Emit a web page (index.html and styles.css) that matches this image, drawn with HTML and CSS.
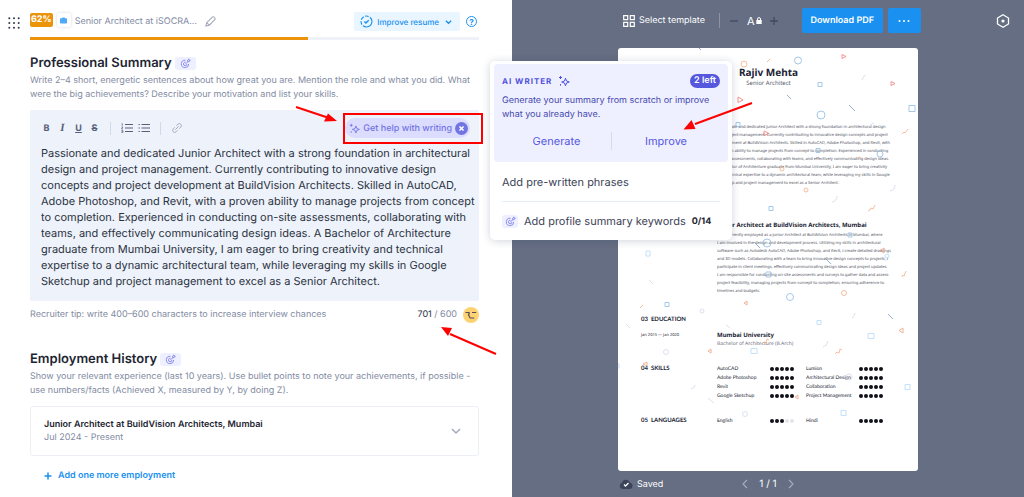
FILE: index.html
```
<!DOCTYPE html>
<html lang="en">
<head>
<meta charset="utf-8">
<title>Resume editor</title>
<link rel="stylesheet" href="styles.css">
</head>
<body>
<svg class="defs" aria-hidden="true">
  <symbol id="target" viewBox="0 0 12 12"><path d="M6 2.500a4 4 0 1 0 3.500 4M6 4.600a1.900 1.900 0 1 0 1.600 2M6 6.500 8.500 4M8.300 4.100V2.400L9.800 1v1.400h1.400L9.900 4.100z"/></symbol>
  <symbol id="sparkle" viewBox="0 0 12 12"><path d="M7.500 3.200 8.500 6l2.800 1-2.800 1-1 2.800-1-2.800-2.800-1 2.800-1zM2.500 1v3M1 2.500h3M2.500 9v1.600"/></symbol>
</svg>
<div class="app">
  <main class="editor">
    <button class="menu" aria-label="Menu">
      <svg viewBox="0 0 12 12" width="12" height="12"><g fill="#30374a"><circle cx="1.300" cy="1.300" r="1"/><circle cx="6" cy="1.300" r="1"/><circle cx="10.700" cy="1.300" r="1"/><circle cx="1.300" cy="6" r="1"/><circle cx="6" cy="6" r="1"/><circle cx="10.700" cy="6" r="1"/><circle cx="1.300" cy="10.700" r="1"/><circle cx="6" cy="10.700" r="1"/><circle cx="10.700" cy="10.700" r="1"/></g></svg>
    </button>
    <div class="column">
      <header class="topline">
        <span class="score">62%</span>
        <span class="case"><svg viewBox="0 0 8 8" width="7" height="7"><path fill="#4ea9f7" d="M2.200 1.500 2.800.5h2.400l.6 1h1.400q.8 0 .8.8v4.200q0 .8-.8.8H.8Q0 7.300 0 6.500V2.300q0-.8.8-.8z"/></svg></span>
        <span class="job">Senior Architect at iSOCRA...</span>
        <button class="plain" aria-label="Rename"><svg viewBox="0 0 12 12" width="11" height="11"><path class="line grey" d="M1 11 1.800 7.300 7.700 1.400a1.500 1.500 0 0 1 2.400 0l.5.6a1.500 1.500 0 0 1 0 2L4.700 10zM1.800 7.300 4.700 10"/></svg></button>
        <button class="improve"><svg viewBox="0 0 14 14" width="13" height="13"><circle class="line blue" cx="7" cy="7" r="5.900" stroke-dasharray="13 1.500 4 1.500 4 1.500 4 1.500"/><path class="line blue bold" d="m4.700 7 1.700 1.700 3-3"/></svg>Improve resume<svg viewBox="0 0 8 6" width="7" height="6"><path class="line blue bold" d="m1 1.500 3 3 3-3"/></svg></button>
        <button class="help" aria-label="Help">?</button>
      </header>
      <div class="progress"><i style="width:62%"></i></div>

      <section>
        <h2>Professional Summary <button class="tag" aria-label="Keywords"><svg width="11" height="11"><use href="#target"/></svg></button></h2>
        <p class="hint">Write 2–4 short, energetic sentences about how great you are. Mention the role and what you did. What<br>were the big achievements? Describe your motivation and list your skills.</p>
        <div class="box">
          <div class="tools">
            <button aria-label="Bold"><b>B</b></button><button aria-label="Italic"><i class="serif">I</i></button><button aria-label="Underline"><u>U</u></button><button aria-label="Strikethrough"><s>S</s></button>
            <span class="rule"></span>
            <button aria-label="Numbered list"><svg viewBox="0 0 12 10" width="12" height="10"><path class="line dark" d="M4 1.500h8M4 5h8M4 8.500h8"/><path class="line dark thin" d="M.5.7h.8v2M.4 4h1.500L.5 6h1.500M.4 7.500h1.500v2H.4M.8 8.500h1"/></svg></button><button aria-label="Bulleted list"><svg viewBox="0 0 12 10" width="12" height="10"><path class="line dark" d="M3.500 1.500H12M3.500 5H12M3.500 8.500H12M.5 1.500h1.300M.5 5h1.300M.5 8.500h1.300"/></svg></button>
            <span class="rule"></span>
            <button aria-label="Link"><svg viewBox="0 0 12 12" width="10" height="10"><path class="line grey" d="m4 8 4-4M5.200 3.300 7 1.500a2.450 2.450 0 0 1 3.500 3.500L8.700 6.800M6.800 8.700 5 10.500A2.450 2.450 0 0 1 1.500 7l1.800-1.800"/></svg></button>
            <button class="assist"><svg class="spark" width="11" height="11"><use href="#sparkle"/></svg>Get help with writing<svg viewBox="0 0 14 14" width="13" height="13"><circle cx="7" cy="7" r="7" fill="#7274e2"/><path d="m4.800 4.800 4.400 4.400m0-4.400L4.800 9.200" stroke="#fff" stroke-width="1.600"/></svg></button>
          </div>
          <textarea rows="9" wrap="off" spellcheck="false" aria-label="Professional summary">Passionate and dedicated Junior Architect with a strong foundation in architectural
design and project management. Currently contributing to innovative design
concepts and project development at BuildVision Architects. Skilled in AutoCAD,
Adobe Photoshop, and Revit, with a proven ability to manage projects from concept
to completion. Experienced in conducting on-site assessments, collaborating with
teams, and effectively communicating design ideas. A Bachelor of Architecture
graduate from Mumbai University, I am eager to bring creativity and technical
expertise to a dynamic architectural team, while leveraging my skills in Google
Sketchup and project management to excel as a Senior Architect.</textarea>
        </div>
        <div class="tip"><span>Recruiter tip: write 400–600 characters to increase interview chances</span><span class="count"><b>701</b> / 600</span><svg viewBox="0 0 16 16" width="16" height="16"><circle cx="8" cy="8" r="8" fill="#fdd272"/><path d="M2.500 5.500h4M9 5.500h4.200M6.500 5.500 5.500 8M5 8.300c1.500-.6 1 2 2.300 2.700h4" fill="none" stroke="#554a58" stroke-width="1.200"/></svg></div>
      </section>

      <section class="history">
        <h2>Employment History <button class="tag" aria-label="Keywords"><svg width="11" height="11"><use href="#target"/></svg></button></h2>
        <p class="hint">Show your relevant experience (last 10 years). Use bullet points to note your achievements, if possible -<br>use numbers/facts (Achieved X, measured by Y, by doing Z).</p>
        <button class="card"><span><strong>Junior Architect at BuildVision Architects, Mumbai</strong><small>Jul 2024 - Present</small></span><svg viewBox="0 0 10 8" width="10" height="8"><path class="line grey bold" d="m1 2 4 4 4-4"/></svg></button>
        <button class="add"><svg viewBox="0 0 8 8" width="8" height="8"><path class="line blue bold" d="M4 .5v7M.5 4h7"/></svg>Add one more employment</button>
      </section>
    </div>
  </main>

  <aside class="preview">
    <div class="bar">
      <button class="template"><svg viewBox="0 0 12 12" width="12" height="12"><path d="M.7.7h4v4h-4zM7.300.7h4v4h-4zM.7 7.300h4v4h-4zM7.300 7.300h4v4h-4z" fill="none" stroke="#fff" stroke-width="1.200"/></svg>Select template</button>
      <span class="split"></span>
      <button class="size" aria-label="Smaller text"><svg viewBox="0 0 8 8" width="8" height="8"><path d="M0 4h8"/></svg></button>
      <span class="letter">A<svg viewBox="0 0 6 7" width="6" height="7"><path fill="#fff" d="M.3 3h5.400v4H.3z"/><path d="M1.500 3V2q0-1.400 1.500-1.400T4.500 2v1" fill="none" stroke="#fff"/></svg></span>
      <button class="size" aria-label="Larger text"><svg viewBox="0 0 8 8" width="8" height="8"><path d="M0 4h8M4 0v8"/></svg></button>
      <button class="primary download">Download PDF</button>
      <button class="primary more" aria-label="More"><svg viewBox="0 0 12 4" width="12" height="4"><g fill="#fff"><circle cx="1.500" cy="2" r="1"/><circle cx="6" cy="2" r="1"/><circle cx="10.500" cy="2" r="1"/></g></svg></button>
      <button class="plain hex" aria-label="Settings"><svg viewBox="0 0 14 14" width="14" height="14"><path d="M7 .8 12.500 4v6L7 13.200 1.500 10V4z" fill="none" stroke="#fff" stroke-width="1.300"/><circle cx="7" cy="7" r="1.600" fill="#fff"/></svg></button>
    </div>

    <article class="sheet">
      <svg class="confetti" viewBox="0 0 300 423" aria-hidden="true">
        <g fill="none" stroke-width="1">
          <g stroke="#8dbbe6"><circle cx="180" cy="12.500" r="3.500"/><circle cx="203" cy="67" r="4"/><circle cx="262" cy="106" r="3"/><circle cx="149" cy="195" r="4"/><circle cx="172" cy="249" r="3.500"/><path d="M200 34.500h4v4h-4zM291 57.500h6v6h-6zM118 74.500h4v4h-4zM198 100.500h4v4h-4zM151 158.500h4v4h-4zM230 185h4v4h-4zM148 224h5v5h-5zM47 254.500h4v4h-4z"/></g>
          <g stroke="#b4dafb"><circle cx="269" cy="208" r="2"/><path d="M199 272.500h4v4h-4zM250 285.500h6v5h-6zM133 300.500h6v5h-6zM287 336.500h5v5h-5zM223 362.500h5v5h-5zM-2 316h3v4h-3zM28 203h4v5h-4z"/></g>
          <g stroke="#f27878"><path d="m224 6.500 4 2-4 2zM273 33.500l4 2-4 2zM120 49l5 3-5 2.500zM146 83l5 2.500-5 2z"/></g>
          <g stroke="#f3ae88"><path d="m103 165-4 2.500 4 2.500zM266 200l-4 2.500 4 2.500zM129 253l-3 2 3 2zM285 280l-4 2.500 4 2.500zM93 301l-3 2 3 2zM29 314l-4 2 4 2zM180 347l-3 2 3 2z" stroke="#f0a080"/><circle cx="126" cy="16" r="3"/><circle cx="164" cy="121" r="2"/><circle cx="188" cy="142" r="2"/><circle cx="226" cy="245" r="2.500"/><path d="m284 86 2-2 1 1 3-4M240 110l2-1 1 2M250 163l2-1 1-2 2 1 2-4M284 229l1-2 1 1 2-5M144 296l2-2 2 1 1-4 2 1M217 306l2-2 2 1 1-4 2 1M22 260l2-2 1-1M149 14l1-1 2-2"/></g>
          <g stroke="#809dcc"><path d="m231 57 6 6M169 47l4 4M136 194l6 6M207 210l6 6M270 266l5 5M81 0l2 2"/></g>
          <g stroke="#d3daea"><path d="M244 32q1-4 4-5M252 79q1-4 4-4M272 143q5-1 5-6M214 154q5-1 5-6M205 299q4-1 5-6M73 341q4-1 4-4M234 270q3-2 3-5M8 276l4 4M31 232l4 4"/><circle cx="48" cy="304" r="2.500"/><circle cx="127" cy="366" r="2.500"/><circle cx="231" cy="329" r="3"/><circle cx="84" cy="263" r="2"/><path d="m90 350 6 5M108 277l4 3"/></g>
        </g>
      </svg>
      <div class="person"><h1>Rajiv Mehta</h1><p>Senior Architect</p></div>
      <div class="resume">
        <p class="cv profile">Passionate and dedicated Junior Architect with a strong foundation in architectural design<br>and project management. Currently contributing to innovative design concepts and project<br>development at BuildVision Architects. Skilled in AutoCAD, Adobe Photoshop, and Revit, with<br>a proven ability to manage projects from concept to completion. Experienced in conducting<br>on-site assessments, collaborating with teams, and effectively communicating design ideas.<br>A Bachelor of Architecture graduate from Mumbai University, I am eager to bring creativity<br>and technical expertise to a dynamic architectural team, while leveraging my skills in Google<br>Sketchup and project management to excel as a Senior Architect.</p>
        <div class="cv work"><h3>Junior Architect at BuildVision Architects, Mumbai</h3><p>I am currently employed as a Junior Architect at BuildVision Architects in Mumbai, where<br>I am involved in the design and development process. Utilizing my skills in architectural<br>software such as Autodesk AutoCAD, Adobe Photoshop, and Revit, I create detailed drawings<br>and 3D models. Collaborating with a team to bring innovative design concepts to projects, I<br>participate in client meetings, effectively communicating design ideas and project updates.<br>I am responsible for conducting on-site assessments and surveys to gather data and assess<br>project feasibility, managing projects from concept to completion, ensuring adherence to<br>timelines and budgets.</p></div>
        <h4>03 &nbsp;EDUCATION</h4>
        <p class="date">Jan 2015 — Jan 2020</p>
        <div class="school"><h3>Mumbai University</h3><p>Bachelor of Architecture (B.Arch)</p></div>
        <h4>04 &nbsp;SKILLS</h4>
        <div class="skills">
          <span>AutoCAD</span><span class="dots"><i></i><i></i><i></i><i></i><i></i></span><span>Lumion</span><span class="dots"><i></i><i></i><i></i><i></i><i></i></span>
          <span>Adobe Photoshop</span><span class="dots"><i></i><i></i><i></i><i></i><i></i></span><span>Architectural Design</span><span class="dots"><i></i><i></i><i></i><i></i><i></i></span>
          <span>Revit</span><span class="dots"><i></i><i></i><i></i><i></i><i></i></span><span>Collaboration</span><span class="dots"><i></i><i></i><i></i><i></i><i></i></span>
          <span>Google Sketchup</span><span class="dots"><i></i><i></i><i></i><i></i><i></i></span><span>Project Management</span><span class="dots"><i></i><i></i><i></i><i></i><i></i></span>
        </div>
        <h4>05 &nbsp;LANGUAGES</h4>
        <div class="skills">
          <span>English</span><span class="dots"><i></i><i></i><i></i><i class="off"></i><i class="off"></i></span><span>Hindi</span><span class="dots"><i></i><i></i><i></i><i></i><i></i></span>
        </div>
      </div>
    </article>

    <footer class="foot">
      <span class="saved"><svg viewBox="0 0 14 10" width="14" height="10"><path fill="#3c4459" d="M3.500 10a3.200 3.200 0 0 1-.6-6.200 4.200 4.200 0 0 1 8-.3A3.300 3.300 0 0 1 10.600 10z"/><path d="m5 5.500 1.500 1.500 3-3" fill="none" stroke="#fff" stroke-width="1.300"/></svg>Saved</span>
      <nav class="pager"><button class="plain" aria-label="Previous page"><svg viewBox="0 0 6 10" width="6" height="10"><path d="M5 1 1 5l4 4"/></svg></button><span>1 / 1</span><button class="plain" aria-label="Next page"><svg viewBox="0 0 6 10" width="6" height="10"><path d="m1 1 4 4-4 4"/></svg></button></nav>
    </footer>
  </aside>

  <div class="popup" role="dialog" aria-label="AI writer">
    <div class="writer">
      <div class="head"><span class="name">AI WRITER</span><svg class="spark" width="12" height="12"><use href="#sparkle"/></svg><span class="left">2 left</span></div>
      <p>Generate your summary from scratch or improve<br>what you already have.</p>
      <div class="actions"><button>Generate</button><button>Improve</button></div>
    </div>
    <button class="row">Add pre-written phrases</button>
    <button class="row keys"><span class="tag"><svg width="11" height="11"><use href="#target"/></svg></span>Add profile summary keywords<b>0/14</b></button>
  </div>

  <div class="frame"></div>
  <svg class="arrows" viewBox="0 0 1024 497" width="1024" height="497" aria-hidden="true">
    <g stroke="#f00" stroke-width="2"><path d="m296 107 33 11M752 103l-57 21M496 354l-46-20"/></g>
    <path fill="#f00" d="m337 121-13 0.500 4-8zM683.500 129.500l8-9.500 4 9zM441 327l11 1-4 8z"/>
  </svg>
</div>
</body>
</html>
```

FILE: styles.css
```
* { box-sizing: border-box; }
body, h1, h2, h3, h4, p { margin: 0; }
body { font-family: Inter, "Liberation Sans", sans-serif; color: #1e2532; background: #fff; text-rendering: geometricPrecision; }
button { font: inherit; color: inherit; background: none; border: 0; padding: 0; display: inline-flex; align-items: center; cursor: pointer; text-rendering: inherit; }
svg { flex: none; }
.defs { position: absolute; width: 0; height: 0; }

.line { fill: none; stroke-width: 1.2; stroke: currentColor; }
.line.bold { stroke-width: 1.5; }
.line.thin { stroke-width: .7; }
.line.grey { stroke: #a3abbd; }
.line.blue { stroke: #1a91f0; }
.line.dark { stroke: #56607a; }
.spark { fill: none; stroke: currentColor; stroke-width: 1; }

.app { position: relative; display: grid; grid-template-columns: minmax(0, 1fr) minmax(0, 1fr); min-height: 100vh; overflow: hidden; }

/* Editor */
.editor { display: grid; grid-template-columns: 30px minmax(0, 1fr); padding-right: 33px; align-items: start; }
.menu { margin: 17px 0 0 8px; }
.topline { display: flex; align-items: center; height: 37px; padding-top: 6px; font-size: 9px; color: #828ba2; white-space: nowrap; }
.score { padding: 0 1px; margin-bottom: 3px; border-radius: 2px; background: #ec930c; color: #fff; font-weight: 700; line-height: 14px; }
.case { display: grid; place-items: center; width: 14px; height: 14px; margin: 0 4px 3px; border-radius: 3px; box-shadow: 0 0 3px #ccd4e2; }
.job { margin-right: 8px; }
.improve { gap: 4px; height: 19px; padding: 0 8px 0 6px; margin-left: auto; border-radius: 2px; background: #e9f5ff; color: #1a91f0; font-size: 8px; font-weight: 500; }
.improve svg:last-child { margin-left: 2px; }
.help { justify-content: center; width: 11px; height: 11px; margin: 0 2px 0 6px; border: 1px solid #1a91f0; border-radius: 50%; color: #1a91f0; font-size: 8px; font-weight: 700; }
.progress { height: 3px; background: #eff2f9; }
.progress i { display: block; height: 100%; background: #ec930c; }

h2 { display: flex; align-items: center; gap: 3px; margin-top: 14px; font-size: 13px; font-weight: 600; line-height: 18px; }
.tag { display: inline-flex; align-items: center; justify-content: center; width: 21px; height: 13px; border-radius: 3px; background: #eff0ff; color: #8183ee; fill: none; stroke: currentColor; stroke-width: 1; }
.hint { font-size: 9px; line-height: 14px; color: #828ba2; white-space: nowrap; margin-top: 2px; }
.box { margin-top: 8px; padding: 8px 9px 12px 11px; background: #eef2fa; border-radius: 2px; }
.tools { display: flex; align-items: center; gap: 5px; height: 20px; color: #56607a; font-size: 9px; white-space: nowrap; }
.tools button { justify-content: center; min-width: 11px; }
.tools u, .tools s { font-weight: 700; }
.serif { font-family: "Liberation Serif", serif; font-weight: 700; font-size: 11px; }
.rule { width: 1px; height: 13px; margin: 0 5px; background: #d3d9e6; }
.tools .assist { height: 20px; gap: 3px; margin-left: auto; padding: 0 2px 0 4px; border-radius: 10px; background: #dcdcff; color: #7274e2; font-weight: 500; }
textarea { display: block; width: calc(100% + 9px); margin-top: 7px; padding: 0; border: 0; outline: 0; resize: none; overflow: hidden; background: none; color: #2b3242; font: 11px/16px Inter, "Liberation Sans", sans-serif; text-rendering: inherit; }
.tip { display: flex; align-items: center; margin-top: 6px; font-size: 9px; line-height: 16px; color: #828ba2; }
.count { margin: 0 6px 0 auto; }
.count b { color: #2b3242; font-weight: 400; }
.history h2 { margin-top: 27px; }
.card { display: flex; justify-content: space-between; width: 100%; margin-top: 8px; padding: 11px 17px 11px 13px; border: 1px solid #eceff5; border-radius: 3px; text-align: left; }
.card strong, .card small { display: block; font-size: 9px; line-height: 13px; }
.card strong { font-weight: 600; }
.card small { color: #828ba2; }
.add { gap: 6px; margin: 13px 0 0 14px; color: #1a91f0; font-size: 9px; font-weight: 600; line-height: 14px; }

/* Preview */
.preview { display: flex; flex-direction: column; background: #656e83; color: #fff; }
.bar { display: flex; align-items: center; height: 41px; padding: 0 14px 0 111px; font-size: 9px; white-space: nowrap; }
.template { gap: 4px; }
.split { width: 1px; height: 15px; margin: 0 10px 0 14px; background: #8b93a5; }
.size svg { fill: none; stroke: #414a60; stroke-width: 1.3; }
.letter { display: flex; align-items: center; gap: 1px; margin: 0 8px 0 9px; font-size: 11px; }
.primary { justify-content: center; height: 25px; border-radius: 2px; background: #1a91f0; font-weight: 600; }
.download { margin: 0 5px 0 24px; padding: 0 9px; }
.more { width: 33px; }
.hex { margin-left: auto; }
.sheet { position: relative; flex: 1; margin: 7px 106px 0; padding: 17px 22px 34px 23px; border-radius: 3px; background: #fff; color: #202334; font-family: "Noto Sans", sans-serif; font-size: 4px; line-height: 8px; }
.confetti { position: absolute; left: 0; top: 0; width: 100%; height: auto; opacity: .8; }
.person { text-align: center; }
h1 { font-size: 10px; line-height: 14px; }
.person p { font-size: 6px; line-height: 8px; color: #55586a; }
.resume { display: grid; grid-template-columns: 76px minmax(0, 1fr); white-space: nowrap; }
.cv { grid-column: 2; color: #505260; }
.profile { margin-top: 37px; }
.work { margin: 30px 0 2px; }
h3 { font-size: 6px; line-height: 12px; color: #202334; }
.work h3 { line-height: 14px; }
h4 { font-family: Lato, sans-serif; font-size: 6px; line-height: 8px; grid-column: 1 / -1; margin-top: 18px; }
.date { margin-top: 8px; }
.school { margin-top: 5px; }
.school p { font-size: 5px; line-height: 6px; color: #70727f; }
.resume h4:nth-of-type(n + 2) { grid-column: 1; }
.skills { display: grid; grid-template-columns: 53px 36px 53px 1fr; row-gap: 1px; margin-top: 18px; font-family: Lato, sans-serif; font-size: 5px; }
.resume h4:last-of-type, .skills:last-child { margin-top: 17px; }
.dots { display: flex; gap: 1px; align-items: center; }
.dots i { width: 4px; height: 4px; border-radius: 50%; background: #101118; }
.dots .off { background: #e4e5ea; }
.foot { position: relative; display: flex; align-items: center; height: 26px; padding: 0 107px; font-size: 9px; }
.saved { display: flex; align-items: center; gap: 4px; }
.pager { position: absolute; inset: 0; display: flex; align-items: center; justify-content: center; gap: 11px; font-size: 10px; }
.pager svg { fill: none; stroke: #a3abbd; stroke-width: 1.2; }

/* AI writer popup */
.popup { position: absolute; left: 490px; top: 61px; width: 242px; padding: 3px 4px 0; border-radius: 5px; background: #fff; box-shadow: 0 1px 8px #1b264a33; }
.writer { padding: 8px; border-radius: 4px; background: #eff0ff; color: #4548ae; }
.head { display: flex; align-items: center; gap: 6px; height: 18px; color: #4f52de; }
.name { font-size: 8px; font-weight: 700; letter-spacing: 1px; }
.left { margin-left: auto; padding: 0 4px; border-radius: 7px; background: #5557df; color: #fff; font-size: 9px; font-weight: 600; line-height: 14px; }
.writer p { margin-top: 4px; font-size: 9px; line-height: 14px; white-space: nowrap; }
.actions { display: grid; grid-template-columns: 1fr 1fr; margin-top: 10px; margin-bottom: 4px; }
.actions button { justify-content: center; height: 18px; color: #5557df; font-size: 11px; }
.actions button + button { border-left: 1px solid #d8dae8; }
.row { display: flex; width: calc(100% - 16px); height: 39px; margin: 0 8px; color: #3c4356; font-size: 11px; white-space: nowrap; }
.row + .row { border-top: 1px solid #e7edf5; }
.keys { gap: 6px; }
.keys .tag { width: 16px; }
.keys b { color: #1e2532; font-size: 9px; }

/* Annotations */
.frame { position: absolute; left: 343px; top: 113px; width: 140px; height: 31px; border: 2px solid #f00; }
.arrows { position: absolute; left: 0; top: 0; pointer-events: none; }
```
